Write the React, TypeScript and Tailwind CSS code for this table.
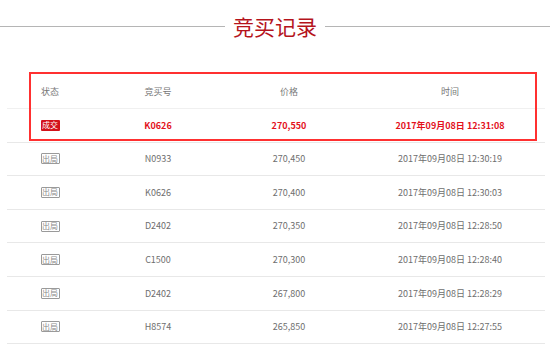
import React from "react";

const rows = [
  ["N0933", "270,450", "2017年09月08日 12:30:19"],
  ["K0626", "270,400", "2017年09月08日 12:30:03"],
  ["D2402", "270,350", "2017年09月08日 12:28:50"],
  ["C1500", "270,300", "2017年09月08日 12:28:40"],
  ["D2402", "267,800", "2017年09月08日 12:28:29"],
  ["H8574", "265,850", "2017年09月08日 12:27:55"],
];

const grid = "grid grid-cols-[86px_130px_132px_190px] items-center text-center";

export default function App() {
  return (
    <div
      className="relative w-[550px] h-[349px] bg-white overflow-hidden"
      style={{ fontFamily: '"Noto Sans CJK SC", "Noto Sans", sans-serif' }}
    >
      <div className="flex items-center h-[52px]">
        <div className="flex-1 h-px bg-[#b5b5b5]" />
        <div className="px-[8px] text-[21px] leading-none text-[#b5141c]">竞买记录</div>
        <div className="flex-1 h-px bg-[#b5b5b5]" />
      </div>
      <div className="ml-[7px] w-[538px] mt-[23px] text-[9px]">
        <div className={`${grid} h-[34px] border-b border-[#f0f0f0] text-[#777777]`}>
          <div>状态</div>
          <div>竞买号</div>
          <div>价格</div>
          <div>时间</div>
        </div>
        <div className={`${grid} h-[33.6px] border-b border-[#e8e8e8] font-bold text-[#e3121c]`}>
          <div className="flex justify-center">
            <span className="w-[19px] h-[11px] flex items-center justify-center bg-[#d3121b] text-white text-[8px] font-normal leading-none rounded-[1px]">成交</span>
          </div>
          <div>K0626</div>
          <div>270,550</div>
          <div>2017年09月08日 12:31:08</div>
        </div>
        {rows.map((r, i) => (
          <div key={i} className={`${grid} h-[33.6px] border-b border-[#e8e8e8] text-[#6e6e6e]`}>
            <div className="flex justify-center">
              <span className="w-[19px] h-[11px] flex items-center justify-center border border-[#9a9a9a] text-[#8a8a8a] text-[8px] leading-none rounded-[1px]">出局</span>
            </div>
            <div>{r[0]}</div>
            <div>{r[1]}</div>
            <div>{r[2]}</div>
          </div>
        ))}
      </div>
      <div className="absolute left-[29px] top-[72px] w-[508px] h-[69px] border-2 border-[#ff3030]" />
    </div>
  );
}
